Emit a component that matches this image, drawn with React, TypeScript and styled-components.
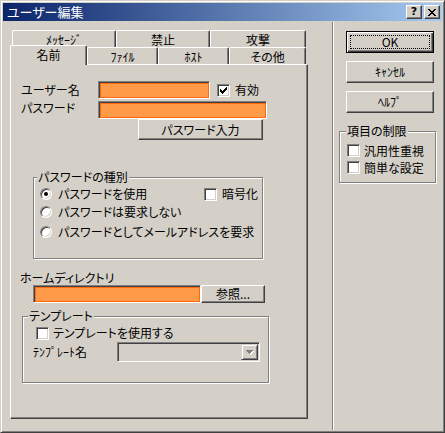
import React from "react";
import styled, { createGlobalStyle } from "styled-components";

const FACE = "#D4D0C8";

const Global = createGlobalStyle`
  html, body { margin: 0; padding: 0; background: ${FACE}; }
  body {
    font-family: "Noto Sans CJK JP", "Noto Sans", sans-serif;
    font-size: 12px;
    line-height: 14px;
    color: #000;
    font-feature-settings: "palt";
  }
  * { box-sizing: border-box; }
`;

const Window = styled.div`
  width: 445px;
  height: 433px;
  background: ${FACE};
  border: 1px solid;
  border-color: ${FACE} #404040 #404040 ${FACE};
  box-shadow: inset 1px 1px #fff, inset -1px -1px #808080;
  padding: 2px;
  display: flex;
  flex-direction: column;
`;

const TitleBar = styled.div`
  height: 18px;
  flex: none;
  display: flex;
  align-items: center;
  padding: 0 2px 0 2px;
  background: linear-gradient(to right, #0a246a, #a6caf0);
  color: #fff;
`;

const TitleText = styled.span`
  flex: 1;
  padding-left: 2px;
  white-space: nowrap;
  font-size: 13px;
`;

const CaptionButton = styled.div<{ $gap?: number }>`
  width: 16px;
  height: 14px;
  margin-left: ${(p) => p.$gap ?? 0}px;
  background: ${FACE};
  border: 1px solid;
  border-color: #fff #404040 #404040 #fff;
  box-shadow: inset -1px -1px #808080;
  display: flex;
  align-items: center;
  justify-content: center;
  color: #000;
  font-family: "DejaVu Sans", sans-serif;
  font-weight: bold;
  font-size: 11px;
  line-height: 12px;
`;

const Body = styled.div`
  flex: 1;
  display: flex;
`;

const LeftPane = styled.div`
  width: 329px;
  padding: 9px 0 0 7px;
`;

const Divider = styled.div`
  width: 2px;
  margin-top: 1px;
  border-left: 1px solid #808080;
  border-right: 1px solid #fff;
`;

const RightPane = styled.div`
  flex: 1;
  display: flex;
  flex-direction: column;
  padding: 10px 0 0 12px;
`;

const TabRow = styled.div<{ $indent?: number }>`
  display: flex;
  height: 17px;
  padding-left: ${(p) => p.$indent ?? 0}px;
`;

const Tab = styled.div<{ $w: number; $active?: boolean }>`
  width: ${(p) => p.$w}px;
  height: ${(p) => (p.$active ? 20 : 17)}px;
  margin-top: ${(p) => (p.$active ? -2 : 0)}px;
  position: relative;
  z-index: ${(p) => (p.$active ? 2 : 0)};
  background: ${FACE};
  border-top: 1px solid #fff;
  border-left: 1px solid #fff;
  border-right: 1px solid #404040;
  border-radius: 2px 2px 0 0;
  box-shadow: inset -1px 0 #808080;
  padding-top: 2px;
  text-align: center;
  white-space: nowrap;
`;

const Panel = styled.div`
  width: 298px;
  height: 355px;
  border: 1px solid;
  border-color: #fff #404040 #404040 #fff;
  box-shadow: inset -1px -1px #808080;
  display: flex;
  flex-direction: column;
  align-items: flex-start;
`;

const Row = styled.div<{ $top?: number; $left?: number; $h: number }>`
  display: flex;
  align-items: center;
  height: ${(p) => p.$h}px;
  margin-top: ${(p) => p.$top ?? 0}px;
  padding-left: ${(p) => p.$left ?? 0}px;
  white-space: nowrap;
`;

const Label = styled.span<{ $w?: number; $lift?: number }>`
  display: inline-block;
  width: ${(p) => (p.$w ? `${p.$w}px` : "auto")};
  position: relative;
  top: ${(p) => -(p.$lift ?? 0)}px;
  white-space: nowrap;
`;

const BlockLabel = styled.div<{ $top: number; $left: number }>`
  margin-top: ${(p) => p.$top}px;
  margin-left: ${(p) => p.$left}px;
  white-space: nowrap;
`;

const OrangeField = styled.div<{ $w: number }>`
  width: ${(p) => p.$w}px;
  height: 18px;
  flex: none;
  border: 1px solid;
  border-color: #808080 #fff #fff #808080;
  background: #ff9a48;
  box-shadow: inset 1px 1px #404040, inset 2px 2px #ff6a10,
    inset -1px -1px #ff6a10;
`;

const PushButton = styled.div<{ $w: number; $h: number; $left?: number; $top?: number }>`
  width: ${(p) => p.$w}px;
  height: ${(p) => p.$h}px;
  flex: none;
  margin-left: ${(p) => p.$left ?? 0}px;
  margin-top: ${(p) => p.$top ?? 0}px;
  background: ${FACE};
  border: 1px solid;
  border-color: #fff #404040 #404040 #fff;
  box-shadow: inset -1px -1px #808080;
  display: flex;
  align-items: center;
  justify-content: center;
  white-space: nowrap;
`;

const DefaultButton = styled.div<{ $w: number; $h: number }>`
  width: ${(p) => p.$w}px;
  height: ${(p) => p.$h}px;
  border: 1px solid #000;
  background: ${FACE};
  box-shadow: inset 1px 1px #fff, inset -1px -1px #404040,
    inset -2px -2px #808080;
  padding: 3px;
  display: flex;
`;

const FocusRect = styled.div`
  flex: 1;
  border: 1px dotted #000;
  display: flex;
  align-items: center;
  justify-content: center;
`;

const Group = styled.div<{ $w: number; $h: number; $top: number; $left: number }>`
  width: ${(p) => p.$w}px;
  height: ${(p) => p.$h}px;
  flex: none;
  margin-top: ${(p) => p.$top}px;
  margin-left: ${(p) => p.$left}px;
  border: 1px solid #808080;
  box-shadow: inset 1px 1px #fff, 1px 1px #fff;
  display: flex;
  flex-direction: column;
  align-items: flex-start;
`;

const GroupTitle = styled.span<{ $left: number }>`
  margin: -8px 0 0 ${(p) => p.$left}px;
  padding: 0 1px;
  background: ${FACE};
  line-height: 14px;
  white-space: nowrap;
`;

const CheckBox = styled.div<{ $left?: number }>`
  width: 13px;
  height: 13px;
  flex: none;
  margin-left: ${(p) => p.$left ?? 0}px;
  background: #fff;
  border: 1px solid;
  border-color: #808080 #fff #fff #808080;
  box-shadow: inset 1px 1px #404040, inset -1px -1px ${FACE};
  svg { display: block; }
`;

const Radio = styled.div<{ $left?: number }>`
  width: 12px;
  height: 12px;
  flex: none;
  margin-left: ${(p) => p.$left ?? 0}px;
  border-radius: 50%;
  background: #fff;
  border: 1px solid;
  border-color: #808080 #fff #fff #808080;
  box-shadow: inset 1px 1px #404040, inset -1px -1px ${FACE};
  display: flex;
  align-items: center;
  justify-content: center;
`;

const RadioDot = styled.div`
  width: 4px;
  height: 4px;
  border-radius: 50%;
  background: #000;
`;

const Option = styled.div<{ $w?: number }>`
  display: flex;
  align-items: center;
  width: ${(p) => (p.$w ? `${p.$w}px` : "auto")};
  flex: none;
`;

const Spacer = styled.span<{ $w: number }>`
  display: inline-block;
  width: ${(p) => p.$w}px;
  flex: none;
`;

const Combo = styled.div<{ $w: number }>`
  width: ${(p) => p.$w}px;
  height: 20px;
  flex: none;
  border: 1px solid;
  border-color: #808080 #fff #fff #808080;
  box-shadow: inset 1px 1px #404040, inset -1px -1px ${FACE};
  background: ${FACE};
  padding: 1px;
  display: flex;
  justify-content: flex-end;
`;

const ComboButton = styled.div`
  width: 17px;
  height: 16px;
  background: ${FACE};
  border: 1px solid;
  border-color: ${FACE} #404040 #404040 ${FACE};
  box-shadow: inset 1px 1px #fff, inset -1px -1px #808080;
  display: flex;
  align-items: center;
  justify-content: center;
`;

const Check = () => (
  <svg width="11" height="11" viewBox="0 0 11 11" shapeRendering="crispEdges">
    <path
      d="M2 4h1v3h-1z M3 5h1v3h-1z M4 6h1v3h-1z M5 5h1v3h-1z M6 4h1v3h-1z M7 3h1v3h-1z M8 2h1v3h-1z"
      fill="#000"
    />
  </svg>
);

const CloseGlyph = () => (
  <svg width="8" height="7" viewBox="0 0 8 7" shapeRendering="crispEdges">
    <path
      d="M0 0h2v1h-2z M1 1h2v1h-2z M2 2h4v1h-4z M3 3h2v1h-2z M2 4h4v1h-4z M1 5h2v1h-2z M0 6h2v1h-2z M6 0h2v1h-2z M5 1h2v1h-2z M5 5h2v1h-2z M6 6h2v1h-2z"
      fill="#000"
    />
  </svg>
);

const DownArrow = () => (
  <svg width="8" height="5" viewBox="0 0 8 5" shapeRendering="crispEdges">
    <path d="M1 1h7v1h-1v1h-1v1h-1v1h-1v-1h-1v-1h-1v-1h-1z" fill="#fff" />
    <path d="M0 0h7v1h-1v1h-1v1h-1v1h-1v-1h-1v-1h-1v-1h-1z" fill="#808080" />
  </svg>
);

export default function App() {
  return (
    <>
      <Global />
      <Window>
        <TitleBar>
          <TitleText>ユーザー編集</TitleText>
          <CaptionButton>?</CaptionButton>
          <CaptionButton $gap={2}>
            <CloseGlyph />
          </CaptionButton>
        </TitleBar>
        <Body>
          <LeftPane>
            <TabRow $indent={2}>
              <Tab $w={104}>ﾒｯｾｰｼﾞ</Tab>
              <Tab $w={94}>禁止</Tab>
              <Tab $w={96}>攻撃</Tab>
            </TabRow>
            <TabRow>
              <Tab $w={77} $active>
                名前
              </Tab>
              <Tab $w={71}>ﾌｧｲﾙ</Tab>
              <Tab $w={71}>ﾎｽﾄ</Tab>
              <Tab $w={77}>その他</Tab>
            </TabRow>
            <Panel>
              <Row $top={16} $left={10} $h={18}>
                <Label $w={77}>ユーザー名</Label>
                <OrangeField $w={112} />
                <CheckBox $left={7}>
                  <Check />
                </CheckBox>
                <Spacer $w={5} />
                <Label>有効</Label>
              </Row>
              <Row $top={2} $left={10} $h={18}>
                <Label $w={77} $lift={2}>
                  パスワード
                </Label>
                <OrangeField $w={169} />
              </Row>
              <PushButton $w={125} $h={21} $left={127}>
                パスワード入力
              </PushButton>

              <Group $w={230} $h={82} $top={37} $left={22}>
                <GroupTitle $left={3}>パスワードの種別</GroupTitle>
                <Row $top={1} $h={18}>
                  <Option $w={170}>
                    <Radio $left={6}>
                      <RadioDot />
                    </Radio>
                    <Spacer $w={6} />
                    <Label>パスワードを使用</Label>
                  </Option>
                  <CheckBox />
                  <Spacer $w={5} />
                  <Label>暗号化</Label>
                </Row>
                <Row $h={18}>
                  <Radio $left={6} />
                  <Spacer $w={6} />
                  <Label>パスワードは要求しない</Label>
                </Row>
                <Row $top={2} $h={18}>
                  <Radio $left={6} />
                  <Spacer $w={6} />
                  <Label>パスワードとしてメールアドレスを要求</Label>
                </Row>
              </Group>

              <BlockLabel $top={12} $left={9}>
                ホームディレクトリ
              </BlockLabel>
              <Row $left={22} $h={18}>
                <OrangeField $w={168} />
                <PushButton $w={64} $h={18}>
                  参照...
                </PushButton>
              </Row>

              <Group $w={247} $h={67} $top={13} $left={11}>
                <GroupTitle $left={5}>テンプレート</GroupTitle>
                <Row $top={1} $h={18}>
                  <CheckBox $left={13} />
                  <Spacer $w={4} />
                  <Label>テンプレートを使用する</Label>
                </Row>
                <Row $h={20}>
                  <Spacer $w={10} />
                  <Label $w={84}>ﾃﾝﾌﾟﾚｰﾄ名</Label>
                  <Combo $w={143}>
                    <ComboButton>
                      <DownArrow />
                    </ComboButton>
                  </Combo>
                </Row>
              </Group>
            </Panel>
          </LeftPane>
          <Divider />
          <RightPane>
            <DefaultButton $w={88} $h={22}>
              <FocusRect>OK</FocusRect>
            </DefaultButton>
            <PushButton $w={88} $h={22} $top={8}>
              ｷｬﾝｾﾙ
            </PushButton>
            <PushButton $w={88} $h={22} $top={8}>
              ﾍﾙﾌﾟ
            </PushButton>
            <Group $w={97} $h={52} $top={18} $left={-7}>
              <GroupTitle $left={6}>項目の制限</GroupTitle>
              <Row $top={4} $h={17}>
                <CheckBox $left={7} />
                <Spacer $w={4} />
                <Label>汎用性重視</Label>
              </Row>
              <Row $h={17}>
                <CheckBox $left={7} />
                <Spacer $w={4} />
                <Label>簡単な設定</Label>
              </Row>
            </Group>
          </RightPane>
        </Body>
      </Window>
    </>
  );
}
